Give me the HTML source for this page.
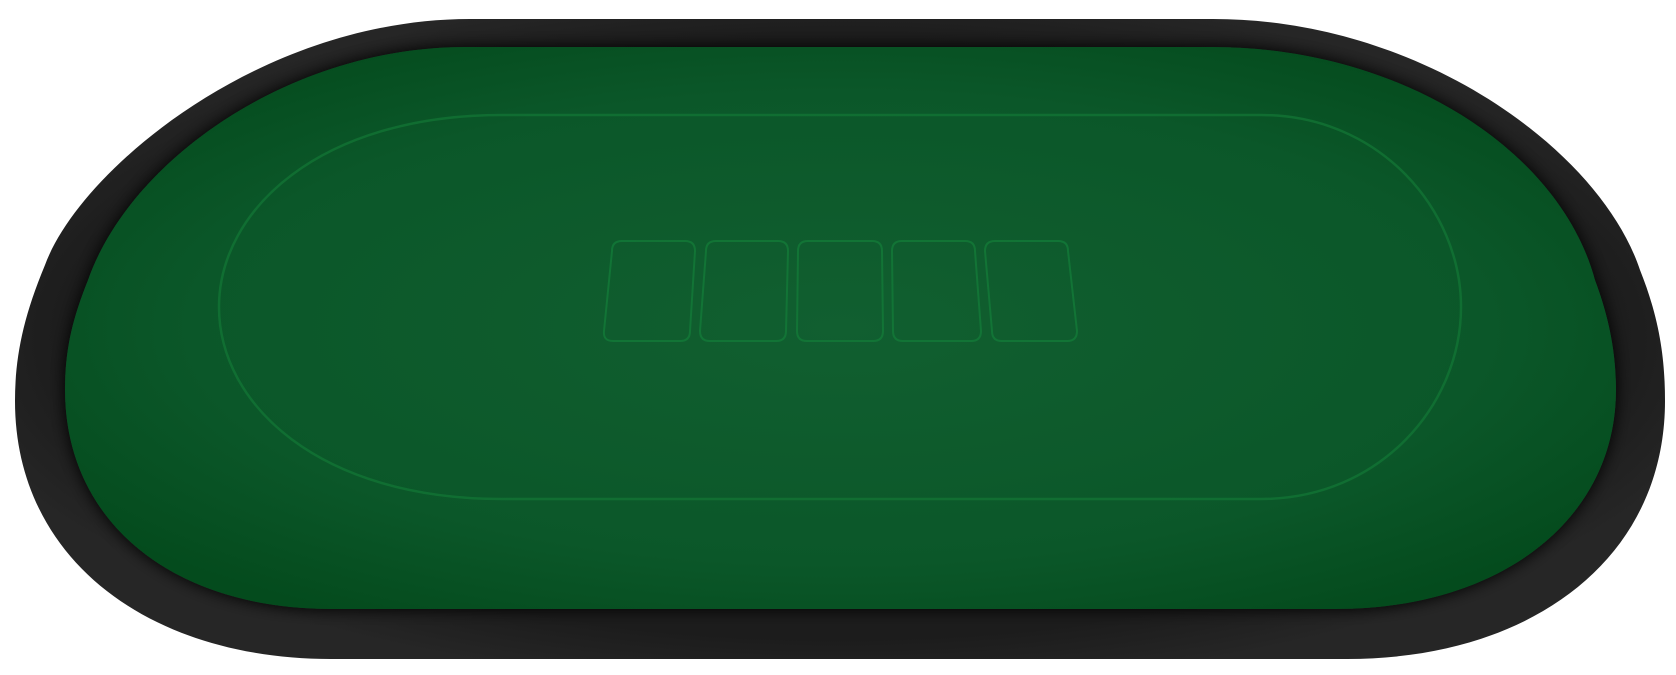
<!DOCTYPE html>
<html><head><style>
html,body{margin:0;padding:0;background:#fff;width:1676px;height:675px;overflow:hidden}
</style></head><body>
<svg width="1676" height="675" viewBox="0 0 1676 675" xmlns="http://www.w3.org/2000/svg">
<defs>
<radialGradient id="felt" cx="0.5" cy="0.5" r="0.6">
<stop offset="0" stop-color="#115f30"/>
<stop offset="0.7" stop-color="#0b5729"/>
<stop offset="1" stop-color="#044b1d"/>
</radialGradient>
<radialGradient id="rim" cx="0.5" cy="0.5" r="0.55">
<stop offset="0.85" stop-color="#1c1c1c"/>
<stop offset="1" stop-color="#262626"/>
</radialGradient>
<filter id="sh" x="-5%" y="-5%" width="110%" height="110%"><feGaussianBlur stdDeviation="8"/></filter>
</defs>
<path d="M470,19 L1213,19 C1420,19 1600,150 1640,270 C1660,320 1665,360 1665,401 C1665,560 1530,659 1347,659 L331,659 C150,659 15,560 15,401 C15,360 22,320 45,265 C80,170 260,19 470,19 Z" fill="url(#rim)"/>
<path d="M465,47 L1213,47 C1400,47 1560,150 1595,280 C1610,320 1616,355 1616,390 C1616,520 1500,609 1336,609 L331,609 C170,609 65,520 65,390 C65,350 72,320 88,280 C130,160 290,47 465,47 Z" fill="#111" filter="url(#sh)"/>
<path d="M465,47 L1213,47 C1400,47 1560,150 1595,280 C1610,320 1616,355 1616,390 C1616,520 1500,609 1336,609 L331,609 C170,609 65,520 65,390 C65,350 72,320 88,280 C130,160 290,47 465,47 Z" fill="url(#felt)"/>
<path d="M502,115 L1261,115 C1380,115 1461,210 1461,307 C1461,405 1380,499 1261,499 L502,499 C320,499 219,405 219,307 C219,210 320,115 502,115 Z" fill="none" stroke="#137536" stroke-width="2.5" opacity="0.75"/>
<g fill="none" stroke="#137a38" stroke-width="2" stroke-linejoin="round" opacity="0.8">
<path d="M622,241 L685,241 Q695,241 695,251 L690,331 Q690,341 680,341 L613,341 Q603,341 604,331 L612,251 Q612,241 622,241 Z"/>
<path d="M716,241 L778,241 Q788,241 788,251 L786,331 Q786,341 776,341 L710,341 Q700,341 700,331 L706,251 Q706,241 716,241 Z"/>
<path d="M808,241 L872,241 Q882,241 882,251 L883,331 Q883,341 873,341 L807,341 Q797,341 797,331 L798,251 Q798,241 808,241 Z"/>
<path d="M902,241 L965,241 Q975,241 975,251 L981,331 Q981,341 971,341 L903,341 Q893,341 893,331 L892,251 Q892,241 902,241 Z"/>
<path d="M995,241 L1058,241 Q1068,241 1068,251 L1077,331 Q1077,341 1067,341 L1002,341 Q992,341 992,331 L985,251 Q985,241 995,241 Z"/>
</g>
</svg>
</body></html>
